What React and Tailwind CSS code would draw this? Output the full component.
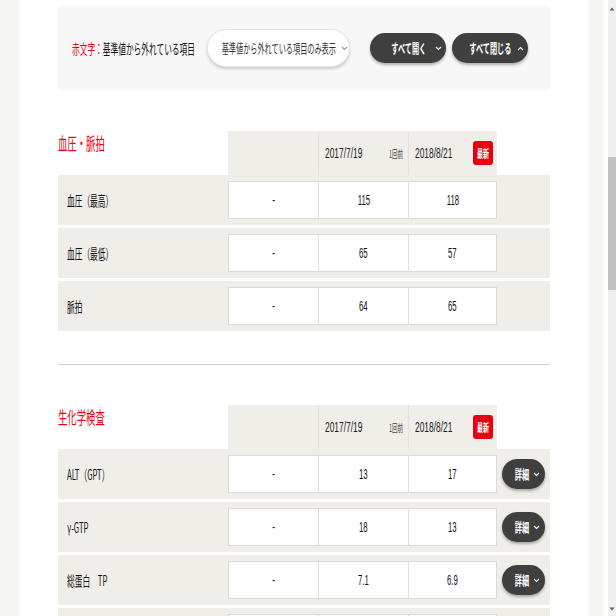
import React from 'react';

const jp = "font-['Noto_Sans_CJK_JP',sans-serif]";
const num = "font-['Liberation_Sans',sans-serif]";

// condensed text: the reference uses a narrow face, so squeeze horizontally
const C = ({ children, center, sx = 'scale-x-[0.55]', className = '' }) => (
  <span className={`inline-block shrink-0 whitespace-nowrap ${center ? 'origin-center' : 'origin-left'} ${sx} ${className}`}>
    {children}
  </span>
);

const Chevron = ({ up, className = '' }) => (
  <svg width="7" height="5" viewBox="0 0 7 5" className={`shrink-0 ${className}`}>
    <path d={up ? 'M1 4 L3.5 1.5 L6 4' : 'M1 1 L3.5 3.5 L6 1'} fill="none" stroke="currentColor" strokeWidth="1.1" />
  </svg>
);

const blood = [
  { label: '血圧（最高）', prev: '115', cur: '118' },
  { label: '血圧（最低）', prev: '65', cur: '57' },
  { label: '脈拍', prev: '64', cur: '65' },
];

const chem = [
  { label: 'ALT（GPT）', prev: '13', cur: '17' },
  { label: 'γ-GTP', prev: '18', cur: '13' },
  { label: '総蛋白　TP', prev: '7.1', cur: '6.9' },
  { label: '', prev: '', cur: '', blank: true },
];

function Header({ title }) {
  return (
    <div className="flex">
      <div className={`w-[170px] text-[17px] leading-[24px] text-[#e60012] ${jp}`}>
        <C>{title}</C>
      </div>
      <div className="flex h-[44px] w-[269px] bg-[#efeee9]">
        <div className="w-[90px]" />
        <div className="flex w-[90px] items-center justify-between border-l border-[#e2e0da] pl-[6px] pr-[3px]">
          <span className={`w-[40px] text-[14px] text-[#222] ${num}`}><C sx="scale-x-[0.6]">2017/7/19</C></span>
          <span className={`w-[16px] text-[10px] text-[#444] ${jp}`}><C>1回前</C></span>
        </div>
        <div className="flex w-[89px] items-center justify-between border-l border-[#e2e0da] pl-[6px] pr-[4px]">
          <span className={`w-[40px] text-[14px] text-[#222] ${num}`}><C sx="scale-x-[0.6]">2018/8/21</C></span>
          <span className={`flex h-[24px] w-[20px] items-center justify-center rounded-[3px] bg-[#e60012] text-[11px] font-bold text-white ${jp}`}>
            <C center>最新</C>
          </span>
        </div>
      </div>
    </div>
  );
}

function Row({ label, prev, cur, detail, blank }) {
  return (
    <div className="mt-[3px] flex h-[50px] items-center bg-[#efeee9]">
      <div className={`w-[170px] pl-[9px] text-[14px] text-[#111] ${jp}`}>
        <C>{label}</C>
      </div>
      <div className={`flex h-[38px] w-[269px] border border-[#dcdad4] bg-white text-[15px] text-[#111] ${num}`}>
        <div className="flex w-[89px] items-center justify-center">{blank ? '' : <C center>-</C>}</div>
        <div className="flex w-[90px] items-center justify-center border-l border-[#e2e0da]"><C center sx="scale-x-[0.52]">{prev}</C></div>
        <div className="flex flex-1 items-center justify-center border-l border-[#e2e0da]"><C center sx="scale-x-[0.52]">{cur}</C></div>
      </div>
      {detail && !blank && (
        <button className={`ml-[5px] flex h-[30px] w-[43px] items-center rounded-full bg-[#3f3f3f] text-[13px] font-bold text-white shadow-[0_2px_3px_rgba(0,0,0,0.3)] ${jp}`}>
          <span className="flex w-[31px] justify-center pl-[8px]"><C center>詳細</C></span>
          <Chevron className="ml-[0px]" />
        </button>
      )}
    </div>
  );
}

export default function App() {
  return (
    <div className="flex h-[616px] w-[616px] overflow-hidden bg-white">
      <div className="w-[19px] bg-[#f5f5f1]" />

      <main className="w-[570px] px-[39px] pt-[6px]">
        {/* filter bar */}
        <div className="flex h-[84px] items-center bg-[#f7f7f7] pl-[14px]">
          <div className={`w-[135px] text-[14px] ${jp}`}>
            <C><span className="text-[#e60012]">赤文字：</span><span className="text-[#111]">基準値から外れている項目</span></C>
          </div>
          <div className={`flex h-[38px] w-[143px] items-center rounded-full border border-[#e6e6e6] bg-white pl-[10px] text-[13px] text-[#333] shadow-[0_2px_3px_rgba(0,0,0,0.18)] ${jp}`}>
            <span className="flex w-[122px] justify-center"><C center>基準値から外れている項目のみ表示</C></span>
            <Chevron className="ml-[1px] text-[#999]" />
          </div>
          <button className={`ml-[20px] flex h-[30px] w-[76px] items-center rounded-full bg-[#3f3f3f] text-[13px] font-bold text-white shadow-[0_2px_3px_rgba(0,0,0,0.3)] ${jp}`}>
            <span className="flex w-[65px] justify-center pl-[12px]"><C center>すべて開く</C></span>
            <Chevron />
          </button>
          <button className={`ml-[6px] flex h-[30px] w-[76px] items-center rounded-full bg-[#3f3f3f] text-[13px] font-bold text-white shadow-[0_2px_3px_rgba(0,0,0,0.3)] ${jp}`}>
            <span className="flex w-[65px] justify-center pl-[12px]"><C center>すべて閉じる</C></span>
            <Chevron up />
          </button>
        </div>

        {/* blood pressure */}
        <section className="mt-[41px]">
          <Header title="血圧・脈拍" />
          <div className="-mt-[3px]">
            {blood.map(r => <Row key={r.label} {...r} />)}
          </div>
        </section>

        <div className="mt-[33px] h-px bg-[#cfcfcf]" />

        {/* biochemistry */}
        <section className="mt-[40px]">
          <Header title="生化学検査" />
          <div className="-mt-[3px]">
            {chem.map((r, i) => <Row key={i} {...r} detail />)}
          </div>
        </section>
      </main>

      <div className="w-[14px] bg-[#f5f5f1]" />
      <div className="w-[5px]" />

      {/* scrollbar */}
      <div className="relative w-[8px] bg-[#f0f0f0]">
        <svg width="8" height="6" viewBox="0 0 8 6" className="absolute left-0 top-[6px]">
          <path d="M4 1.5 L6.5 4.5 L1.5 4.5 Z" fill="#606060" />
        </svg>
        <div className="absolute left-0 top-[157px] h-[133px] w-[8px] bg-[#c1c1c1]" />
        <svg width="8" height="6" viewBox="0 0 8 6" className="absolute bottom-[4px] left-0">
          <path d="M4 4.5 L6.5 1.5 L1.5 1.5 Z" fill="#606060" />
        </svg>
      </div>
    </div>
  );
}
